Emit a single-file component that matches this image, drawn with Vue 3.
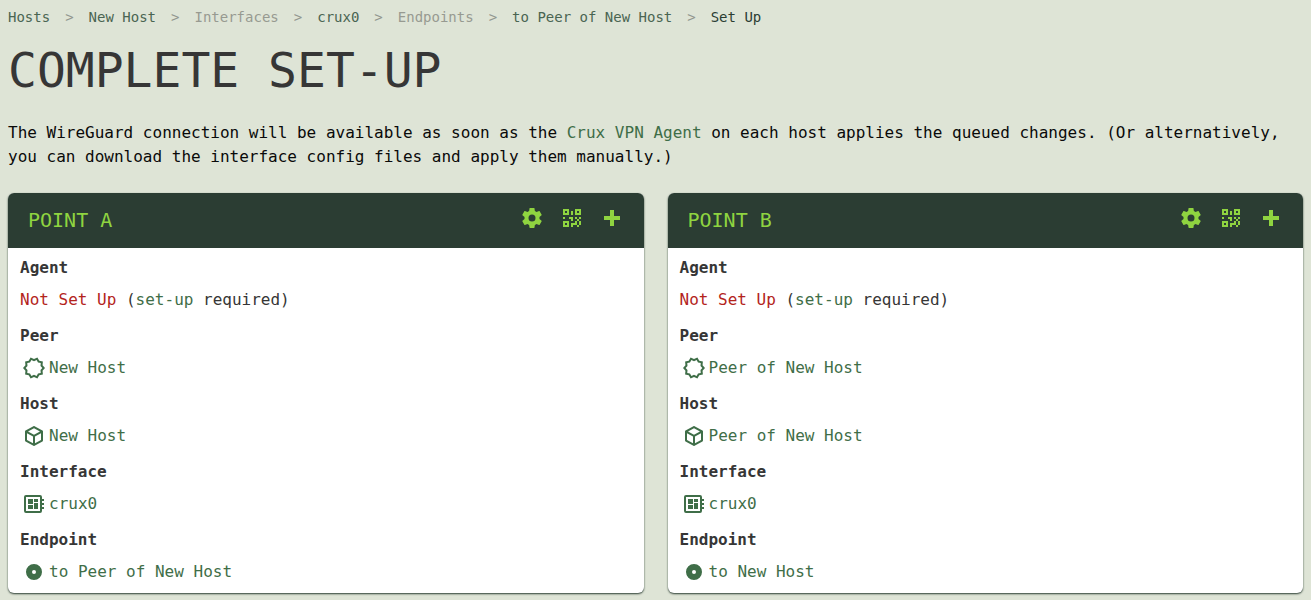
<script setup>
const crumbs = [
  { text: 'Hosts', kind: 'link' },
  { text: 'New Host', kind: 'link' },
  { text: 'Interfaces', kind: 'muted' },
  { text: 'crux0', kind: 'link' },
  { text: 'Endpoints', kind: 'muted' },
  { text: 'to Peer of New Host', kind: 'link' },
  { text: 'Set Up', kind: 'current' },
]

const icons = {
  cog: 'M12,15.5A3.5,3.5 0 0,1 8.5,12A3.5,3.5 0 0,1 12,8.5A3.5,3.5 0 0,1 15.5,12A3.5,3.5 0 0,1 12,15.5M19.43,12.97C19.47,12.65 19.5,12.33 19.5,12C19.5,11.67 19.47,11.34 19.43,11L21.54,9.37C21.73,9.22 21.78,8.95 21.66,8.73L19.66,5.27C19.54,5.05 19.27,4.96 19.05,5.05L16.56,6.05C16.04,5.66 15.5,5.32 14.87,5.07L14.5,2.42C14.46,2.18 14.25,2 14,2H10C9.75,2 9.54,2.18 9.5,2.42L9.13,5.07C8.5,5.32 7.96,5.66 7.44,6.05L4.95,5.05C4.73,4.96 4.46,5.05 4.34,5.27L2.34,8.73C2.21,8.95 2.27,9.22 2.46,9.37L4.57,11C4.53,11.34 4.5,11.67 4.5,12C4.5,12.33 4.53,12.65 4.57,12.97L2.46,14.63C2.27,14.78 2.21,15.05 2.34,15.27L4.34,18.73C4.46,18.95 4.73,19.03 4.95,18.95L7.44,17.94C7.96,18.34 8.5,18.68 9.13,18.93L9.5,21.58C9.54,21.82 9.75,22 10,22H14C14.25,22 14.46,21.82 14.5,21.58L14.87,18.93C15.5,18.67 16.04,18.34 16.56,17.94L19.05,18.95C19.27,19.03 19.54,18.95 19.66,18.73L21.66,15.27C21.78,15.05 21.73,14.78 21.54,14.63L19.43,12.97Z',
  qrcode: 'M3,11H5V13H3V11M11,5H13V9H11V5M9,11H13V15H11V13H9V11M15,11H17V13H19V11H21V13H19V15H21V19H19V21H17V19H13V21H11V17H15V15H17V13H15V11M19,19V15H17V19H19M15,3H21V9H15V3M17,5V7H19V5H17M3,3H9V9H3V3M5,5V7H7V5H5M3,15H9V21H3V15M5,17V19H7V17H5Z',
  plus: 'M20 14H14V20H10V14H4V10H10V4H14V10H20V14Z',
  peer: 'M23,12L20.56,14.78L20.9,18.46L17.29,19.28L15.4,22.46L12,21L8.6,22.47L6.71,19.29L3.1,18.47L3.44,14.78L1,12L3.44,9.21L3.1,5.53L6.71,4.72L8.6,1.54L12,3L15.4,1.54L17.29,4.72L20.9,5.54L20.56,9.22L23,12M20.33,12L18.5,9.89L18.74,7.1L16,6.5L14.58,4.07L12,5.18L9.42,4.07L8,6.5L5.26,7.09L5.5,9.88L3.67,12L5.5,14.1L5.26,16.9L8,17.5L9.42,19.93L12,18.81L14.58,19.92L16,17.5L18.74,16.89L18.5,14.1L20.33,12Z',
  host: 'M21,16.5C21,16.88 20.79,17.21 20.47,17.38L12.57,21.82C12.41,21.94 12.21,22 12,22C11.79,22 11.59,21.94 11.43,21.82L3.53,17.38C3.21,17.21 3,16.88 3,16.5V7.5C3,7.12 3.21,6.79 3.53,6.62L11.43,2.18C11.59,2.06 11.79,2 12,2C12.21,2 12.41,2.06 12.57,2.18L20.47,6.62C20.79,6.79 21,7.12 21,7.5V16.5M12,4.15L6.04,7.5L12,10.85L17.96,7.5L12,4.15M5,15.91L11,19.29V12.58L5,9.21V15.91M19,15.91V9.21L13,12.58V19.29L19,15.91Z',
  board: 'M22,9V7H20V5A2,2 0 0,0 18,3H4A2,2 0 0,0 2,5V19A2,2 0 0,0 4,21H18A2,2 0 0,0 20,19V17H22V15H20V13H22V11H20V9H22M18,19H4V5H18V19M6,13H11V17H6V13M12,7H16V10H12V7M6,7H11V12H6V7M12,11H16V17H12V11Z',
  endpoint: 'M12,4A8,8 0 0,0 4,12A8,8 0 0,0 12,20A8,8 0 0,0 20,12A8,8 0 0,0 12,4M12,10A2,2 0 0,1 14,12A2,2 0 0,1 12,14A2,2 0 0,1 10,12A2,2 0 0,1 12,10Z',
}

const actions = [
  { icon: 'cog', label: 'Download config' },
  { icon: 'qrcode', label: 'Show QR code' },
  { icon: 'plus', label: 'Add' },
]

const makePoint = (title, host, endpoint) => ({
  title,
  rows: [
    { label: 'Peer', icon: 'peer', value: host },
    { label: 'Host', icon: 'host', value: host },
    { label: 'Interface', icon: 'board', value: 'crux0' },
    { label: 'Endpoint', icon: 'endpoint', value: endpoint },
  ],
})

const points = [
  makePoint('Point A', 'New Host', 'to Peer of New Host'),
  makePoint('Point B', 'Peer of New Host', 'to New Host'),
]
</script>

<template>
  <div class="page">
    <nav aria-label="Breadcrumb">
      <ol class="crumbs">
        <li v-for="crumb in crumbs" :key="crumb.text" class="crumb">
          <a v-if="crumb.kind !== 'muted'" href="#" :class="crumb.kind">{{ crumb.text }}</a>
          <span v-else class="muted">{{ crumb.text }}</span>
        </li>
      </ol>
    </nav>

    <main>
      <h1>Complete Set-Up</h1>
      <p class="intro">
        The WireGuard connection will be available as soon as the <a href="#">Crux VPN Agent</a> on
        each host applies the queued changes. (Or alternatively, you can download the interface
        config files and apply them manually.)
      </p>

      <div class="points">
        <section v-for="point in points" :key="point.title" class="card">
          <header class="card-header">
            <h2>{{ point.title }}</h2>
            <div class="actions">
              <button v-for="a in actions" :key="a.icon" type="button" :aria-label="a.label">
                <svg class="icon" viewBox="0 0 24 24" aria-hidden="true"><path :d="icons[a.icon]" /></svg>
              </button>
            </div>
          </header>
          <dl class="details">
            <div class="row">
              <dt>Agent</dt>
              <dd><span class="danger">Not Set Up</span> (<a href="#">set-up</a> required)</dd>
            </div>
            <div v-for="row in point.rows" :key="row.label" class="row">
              <dt>{{ row.label }}</dt>
              <dd>
                <a href="#" class="icon-link">
                  <svg class="icon" viewBox="0 0 24 24" aria-hidden="true"><path :d="icons[row.icon]" /></svg>
                  <span>{{ row.value }}</span>
                </a>
              </dd>
            </div>
          </dl>
        </section>
      </div>
    </main>
  </div>
</template>

<style>
body {
  background: #dee4d6;
}
</style>

<style scoped>
.page {
  padding: 5px 8px 6px;
  font-family: "DejaVu Sans Mono", monospace;
  font-size: 16px;
  line-height: 24px;
  color: #0a0a0a;
}
a {
  color: #3f6e48;
  text-decoration: none;
}
.crumbs {
  display: flex;
  flex-wrap: wrap;
  margin: 0;
  padding: 0;
  list-style: none;
  font-size: 14px;
}
.crumb + .crumb::before {
  content: ">";
  margin: 0 15px;
  color: #92978f;
}
.link {
  color: #4a6552;
}
.muted {
  color: #979a91;
}
.current {
  color: #2b3d33;
}
h1 {
  margin: 15px 0 25px;
  font-size: 48px;
  font-weight: 400;
  line-height: 52px;
  text-transform: uppercase;
  color: #363636;
}
.intro {
  margin: 0 0 24px;
}
.points {
  display: grid;
  grid-template-columns: 1fr 1fr;
  gap: 24px;
}
.card {
  overflow: hidden;
  border-radius: 6px;
  background: #fff;
  box-shadow: 0 1px 2px #2b3d33;
  color: #363636;
}
.card-header {
  display: flex;
  align-items: flex-start;
  justify-content: space-between;
  padding: 11px 20px 12px;
  background: #2b3d33;
  color: #8fd440;
}
h2 {
  margin: 0;
  font-size: 20px;
  font-weight: 400;
  line-height: 32px;
  text-transform: uppercase;
}
.actions {
  display: flex;
  gap: 16px;
  padding: 2px 0;
}
button {
  display: flex;
  padding: 0;
  border: 0;
  background: none;
  color: inherit;
  cursor: pointer;
}
.icon {
  display: block;
  flex: none;
  width: 24px;
  height: 24px;
  fill: currentColor;
}
.details {
  display: grid;
  gap: 12px;
  margin: 0;
  padding: 8px 12px 9px;
}
.row {
  display: grid;
  gap: 8px;
}
dt {
  font-weight: 700;
}
dd {
  margin: 0;
}
.danger {
  color: #b3241c;
}
.icon-link {
  display: inline-flex;
  gap: 3px;
  margin-left: 2px;
  vertical-align: top;
}
</style>
